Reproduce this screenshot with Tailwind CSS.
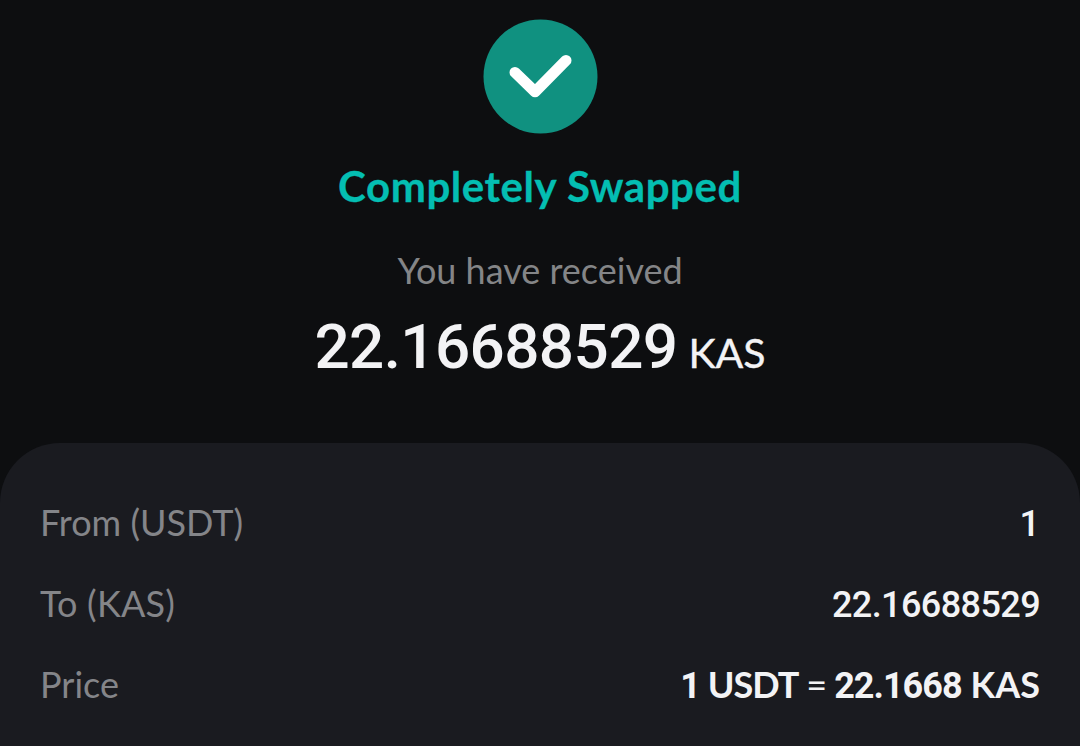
<!DOCTYPE html>
<html lang="en">
  <head>
    <meta charset="UTF-8" />
    <meta name="viewport" content="width=device-width, initial-scale=1.0" />
    <title>Swap Result</title>
    <script src="https://cdn.jsdelivr.net/npm/@tailwindcss/browser@4"></script>
  </head>

  <body
    class="bg-[#0d0e10] font-[Lato,sans-serif] h-screen flex flex-col overflow-hidden whitespace-nowrap"
  >
    <div class="h-[443px] shrink-0 flex flex-col items-center pt-[19px]">
      <svg class="size-[115px]" viewBox="0 0 115 115" fill="none">
        <circle cx="57.5" cy="57.5" r="57" fill="#109180" />
        <path
          d="M32 53.4L52 72.8L83 41.4"
          stroke="#fff"
          stroke-width="11"
          stroke-linecap="round"
          stroke-linejoin="round"
        />
      </svg>
      <h1
        class="mt-[27px] text-[42px] leading-[50px] font-bold tracking-[0.55px] text-[#04beb2] [-webkit-text-stroke:0.3px]"
      >
        Completely Swapped
      </h1>
      <p class="mt-[39px] text-[36px] leading-[40px] text-[#848587]">
        You have received
      </p>
      <div class="mt-[22px] flex items-baseline gap-[11px] text-[#f3f3f5]">
        <span
          class="font-[Roboto,sans-serif] text-[62px] leading-[70px] font-medium tracking-[-0.6px]"
          >22.16688529</span
        >
        <span class="text-[41px] leading-[50px] [-webkit-text-stroke:0.4px]"
          >KAS</span
        >
      </div>
    </div>

    <div class="flex-1 bg-[#1a1b20] rounded-t-[60px] pt-[52px] px-10 text-[36px]">
      <div class="h-[81px] flex justify-between items-baseline">
        <span class="text-[#848589]">From (USDT)</span>
        <span class="font-[Roboto,sans-serif] font-medium text-[#f3f3f5]"
          >1</span
        >
      </div>
      <div class="h-[81px] flex justify-between items-baseline">
        <span class="text-[#848589] tracking-[0.2px]">To (KAS)</span>
        <span
          class="font-[Roboto,sans-serif] font-medium tracking-[-0.6px] text-[#f3f3f5]"
          >22.16688529</span
        >
      </div>
      <div class="h-[81px] flex justify-between items-baseline">
        <span class="text-[#848589]">Price</span>
        <div
          class="flex items-baseline gap-2 text-[#f3f3f5] font-bold tracking-[-1px]"
        >
          <span><span class="font-[Roboto,sans-serif]">1</span> USDT</span>
          <span class="font-normal">=</span>
          <span
            ><span class="font-[Roboto,sans-serif]">22.1668</span
            ><span class="ml-[9px] tracking-normal">KAS</span></span
          >
        </div>
      </div>
    </div>
  </body>
</html>
